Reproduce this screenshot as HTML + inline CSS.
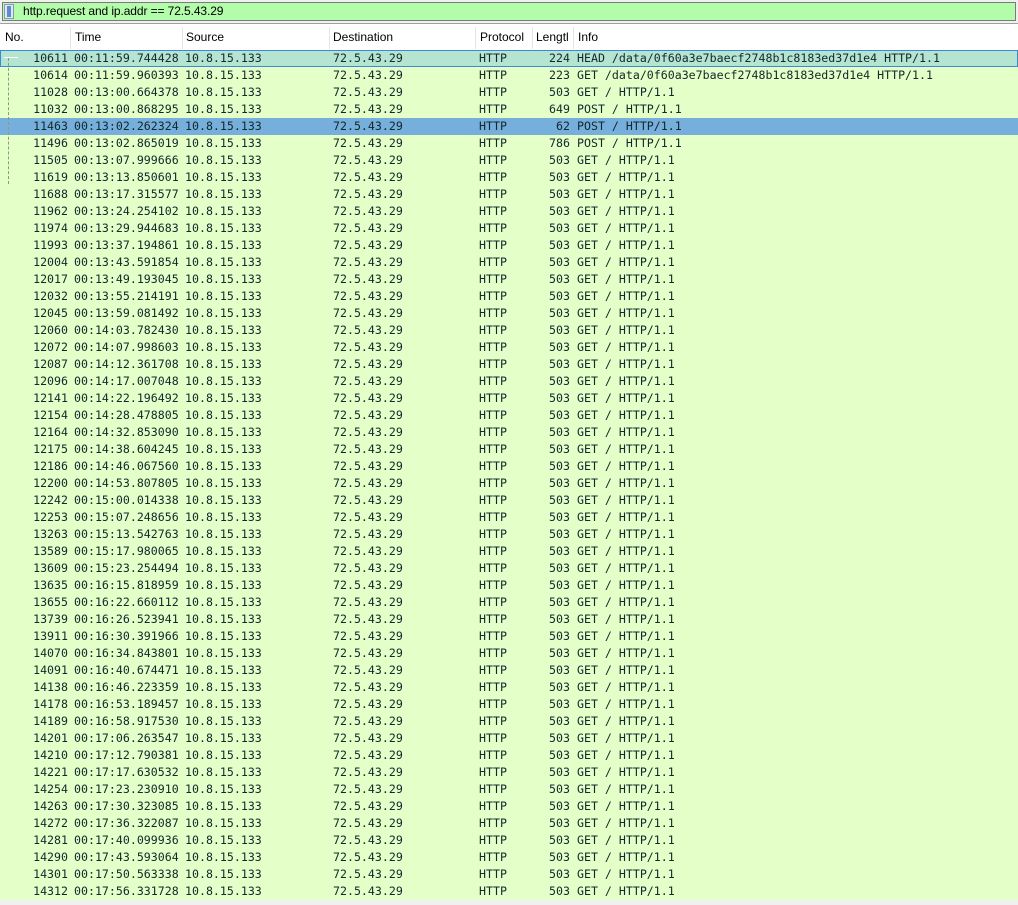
<!DOCTYPE html>
<html><head><style>
body{margin:0;width:1018px;height:905px;background:#f0f0f0;overflow:hidden;position:relative;font-family:"Liberation Sans",sans-serif}
#fb{position:absolute;left:0;top:0;width:1018px;height:23px;background:#f0f0f0}
#fin{position:absolute;left:2px;top:2px;width:1014px;height:19px;background:#b3fca9;border:1px solid #7a7a7a;box-sizing:border-box}
#bm{position:absolute;left:4px;top:4px;width:10px;height:15px;background:#dfe8f2;border:1px solid #8a9ab0;box-sizing:border-box}
#bm:after{content:"";position:absolute;left:2px;top:1px;width:4px;height:11px;background:#5b8ccf}
#ft{position:absolute;left:23px;top:4px;font-size:12px;color:#000;letter-spacing:-0.1px}
#hd{position:absolute;left:0;top:23px;width:1018px;height:27px;background:#fff;border-top:1px solid #a0a0a0;box-sizing:border-box}
.h{position:absolute;top:6px;font-size:12px;color:#000}
.sep{position:absolute;top:3px;width:1px;height:22px;background:#e5e5e5}
#rows{position:absolute;left:0;top:50px;width:1018px}
.r{height:17px;background:#e4ffc7;position:relative;font-family:"DejaVu Sans Mono","Liberation Mono",monospace;font-size:11.6px;line-height:17px;color:#12272e;white-space:pre}
.r span{position:absolute;top:0}
.n{right:950px}.t{left:74px}.s{left:185px}.d{left:333px}.p{left:479px}.l{right:448px}.i{left:577px}
.a{background:#b5e4d0;outline:1px solid #3b88d6;outline-offset:-1px}
.b{background:#76aedc}
</style></head><body>
<div id="fb"><div id="fin"></div><div id="bm"></div><div id="ft">http.request and ip.addr == 72.5.43.29</div></div>
<div id="hd">
<span class="h" style="left:5px">No.</span><div class="sep" style="left:70px"></div>
<span class="h" style="left:75px">Time</span><div class="sep" style="left:182px"></div>
<span class="h" style="left:186px">Source</span><div class="sep" style="left:329px"></div>
<span class="h" style="left:333px">Destination</span><div class="sep" style="left:475px"></div>
<span class="h" style="left:480px">Protocol</span><div class="sep" style="left:532px"></div>
<span class="h" style="left:536px">Lengtl</span><div class="sep" style="left:573px"></div>
<span class="h" style="left:578px">Info</span>
</div>
<div id="rows">
<div class="r a"><span class="n">10611</span><span class="t">00:11:59.744428</span><span class="s">10.8.15.133</span><span class="d">72.5.43.29</span><span class="p">HTTP</span><span class="l">224</span><span class="i">HEAD /data/0f60a3e7baecf2748b1c8183ed37d1e4 HTTP/1.1</span></div>
<div class="r"><span class="n">10614</span><span class="t">00:11:59.960393</span><span class="s">10.8.15.133</span><span class="d">72.5.43.29</span><span class="p">HTTP</span><span class="l">223</span><span class="i">GET /data/0f60a3e7baecf2748b1c8183ed37d1e4 HTTP/1.1</span></div>
<div class="r"><span class="n">11028</span><span class="t">00:13:00.664378</span><span class="s">10.8.15.133</span><span class="d">72.5.43.29</span><span class="p">HTTP</span><span class="l">503</span><span class="i">GET / HTTP/1.1</span></div>
<div class="r"><span class="n">11032</span><span class="t">00:13:00.868295</span><span class="s">10.8.15.133</span><span class="d">72.5.43.29</span><span class="p">HTTP</span><span class="l">649</span><span class="i">POST / HTTP/1.1</span></div>
<div class="r b"><span class="n">11463</span><span class="t">00:13:02.262324</span><span class="s">10.8.15.133</span><span class="d">72.5.43.29</span><span class="p">HTTP</span><span class="l">62</span><span class="i">POST / HTTP/1.1</span></div>
<div class="r"><span class="n">11496</span><span class="t">00:13:02.865019</span><span class="s">10.8.15.133</span><span class="d">72.5.43.29</span><span class="p">HTTP</span><span class="l">786</span><span class="i">POST / HTTP/1.1</span></div>
<div class="r"><span class="n">11505</span><span class="t">00:13:07.999666</span><span class="s">10.8.15.133</span><span class="d">72.5.43.29</span><span class="p">HTTP</span><span class="l">503</span><span class="i">GET / HTTP/1.1</span></div>
<div class="r"><span class="n">11619</span><span class="t">00:13:13.850601</span><span class="s">10.8.15.133</span><span class="d">72.5.43.29</span><span class="p">HTTP</span><span class="l">503</span><span class="i">GET / HTTP/1.1</span></div>
<div class="r"><span class="n">11688</span><span class="t">00:13:17.315577</span><span class="s">10.8.15.133</span><span class="d">72.5.43.29</span><span class="p">HTTP</span><span class="l">503</span><span class="i">GET / HTTP/1.1</span></div>
<div class="r"><span class="n">11962</span><span class="t">00:13:24.254102</span><span class="s">10.8.15.133</span><span class="d">72.5.43.29</span><span class="p">HTTP</span><span class="l">503</span><span class="i">GET / HTTP/1.1</span></div>
<div class="r"><span class="n">11974</span><span class="t">00:13:29.944683</span><span class="s">10.8.15.133</span><span class="d">72.5.43.29</span><span class="p">HTTP</span><span class="l">503</span><span class="i">GET / HTTP/1.1</span></div>
<div class="r"><span class="n">11993</span><span class="t">00:13:37.194861</span><span class="s">10.8.15.133</span><span class="d">72.5.43.29</span><span class="p">HTTP</span><span class="l">503</span><span class="i">GET / HTTP/1.1</span></div>
<div class="r"><span class="n">12004</span><span class="t">00:13:43.591854</span><span class="s">10.8.15.133</span><span class="d">72.5.43.29</span><span class="p">HTTP</span><span class="l">503</span><span class="i">GET / HTTP/1.1</span></div>
<div class="r"><span class="n">12017</span><span class="t">00:13:49.193045</span><span class="s">10.8.15.133</span><span class="d">72.5.43.29</span><span class="p">HTTP</span><span class="l">503</span><span class="i">GET / HTTP/1.1</span></div>
<div class="r"><span class="n">12032</span><span class="t">00:13:55.214191</span><span class="s">10.8.15.133</span><span class="d">72.5.43.29</span><span class="p">HTTP</span><span class="l">503</span><span class="i">GET / HTTP/1.1</span></div>
<div class="r"><span class="n">12045</span><span class="t">00:13:59.081492</span><span class="s">10.8.15.133</span><span class="d">72.5.43.29</span><span class="p">HTTP</span><span class="l">503</span><span class="i">GET / HTTP/1.1</span></div>
<div class="r"><span class="n">12060</span><span class="t">00:14:03.782430</span><span class="s">10.8.15.133</span><span class="d">72.5.43.29</span><span class="p">HTTP</span><span class="l">503</span><span class="i">GET / HTTP/1.1</span></div>
<div class="r"><span class="n">12072</span><span class="t">00:14:07.998603</span><span class="s">10.8.15.133</span><span class="d">72.5.43.29</span><span class="p">HTTP</span><span class="l">503</span><span class="i">GET / HTTP/1.1</span></div>
<div class="r"><span class="n">12087</span><span class="t">00:14:12.361708</span><span class="s">10.8.15.133</span><span class="d">72.5.43.29</span><span class="p">HTTP</span><span class="l">503</span><span class="i">GET / HTTP/1.1</span></div>
<div class="r"><span class="n">12096</span><span class="t">00:14:17.007048</span><span class="s">10.8.15.133</span><span class="d">72.5.43.29</span><span class="p">HTTP</span><span class="l">503</span><span class="i">GET / HTTP/1.1</span></div>
<div class="r"><span class="n">12141</span><span class="t">00:14:22.196492</span><span class="s">10.8.15.133</span><span class="d">72.5.43.29</span><span class="p">HTTP</span><span class="l">503</span><span class="i">GET / HTTP/1.1</span></div>
<div class="r"><span class="n">12154</span><span class="t">00:14:28.478805</span><span class="s">10.8.15.133</span><span class="d">72.5.43.29</span><span class="p">HTTP</span><span class="l">503</span><span class="i">GET / HTTP/1.1</span></div>
<div class="r"><span class="n">12164</span><span class="t">00:14:32.853090</span><span class="s">10.8.15.133</span><span class="d">72.5.43.29</span><span class="p">HTTP</span><span class="l">503</span><span class="i">GET / HTTP/1.1</span></div>
<div class="r"><span class="n">12175</span><span class="t">00:14:38.604245</span><span class="s">10.8.15.133</span><span class="d">72.5.43.29</span><span class="p">HTTP</span><span class="l">503</span><span class="i">GET / HTTP/1.1</span></div>
<div class="r"><span class="n">12186</span><span class="t">00:14:46.067560</span><span class="s">10.8.15.133</span><span class="d">72.5.43.29</span><span class="p">HTTP</span><span class="l">503</span><span class="i">GET / HTTP/1.1</span></div>
<div class="r"><span class="n">12200</span><span class="t">00:14:53.807805</span><span class="s">10.8.15.133</span><span class="d">72.5.43.29</span><span class="p">HTTP</span><span class="l">503</span><span class="i">GET / HTTP/1.1</span></div>
<div class="r"><span class="n">12242</span><span class="t">00:15:00.014338</span><span class="s">10.8.15.133</span><span class="d">72.5.43.29</span><span class="p">HTTP</span><span class="l">503</span><span class="i">GET / HTTP/1.1</span></div>
<div class="r"><span class="n">12253</span><span class="t">00:15:07.248656</span><span class="s">10.8.15.133</span><span class="d">72.5.43.29</span><span class="p">HTTP</span><span class="l">503</span><span class="i">GET / HTTP/1.1</span></div>
<div class="r"><span class="n">13263</span><span class="t">00:15:13.542763</span><span class="s">10.8.15.133</span><span class="d">72.5.43.29</span><span class="p">HTTP</span><span class="l">503</span><span class="i">GET / HTTP/1.1</span></div>
<div class="r"><span class="n">13589</span><span class="t">00:15:17.980065</span><span class="s">10.8.15.133</span><span class="d">72.5.43.29</span><span class="p">HTTP</span><span class="l">503</span><span class="i">GET / HTTP/1.1</span></div>
<div class="r"><span class="n">13609</span><span class="t">00:15:23.254494</span><span class="s">10.8.15.133</span><span class="d">72.5.43.29</span><span class="p">HTTP</span><span class="l">503</span><span class="i">GET / HTTP/1.1</span></div>
<div class="r"><span class="n">13635</span><span class="t">00:16:15.818959</span><span class="s">10.8.15.133</span><span class="d">72.5.43.29</span><span class="p">HTTP</span><span class="l">503</span><span class="i">GET / HTTP/1.1</span></div>
<div class="r"><span class="n">13655</span><span class="t">00:16:22.660112</span><span class="s">10.8.15.133</span><span class="d">72.5.43.29</span><span class="p">HTTP</span><span class="l">503</span><span class="i">GET / HTTP/1.1</span></div>
<div class="r"><span class="n">13739</span><span class="t">00:16:26.523941</span><span class="s">10.8.15.133</span><span class="d">72.5.43.29</span><span class="p">HTTP</span><span class="l">503</span><span class="i">GET / HTTP/1.1</span></div>
<div class="r"><span class="n">13911</span><span class="t">00:16:30.391966</span><span class="s">10.8.15.133</span><span class="d">72.5.43.29</span><span class="p">HTTP</span><span class="l">503</span><span class="i">GET / HTTP/1.1</span></div>
<div class="r"><span class="n">14070</span><span class="t">00:16:34.843801</span><span class="s">10.8.15.133</span><span class="d">72.5.43.29</span><span class="p">HTTP</span><span class="l">503</span><span class="i">GET / HTTP/1.1</span></div>
<div class="r"><span class="n">14091</span><span class="t">00:16:40.674471</span><span class="s">10.8.15.133</span><span class="d">72.5.43.29</span><span class="p">HTTP</span><span class="l">503</span><span class="i">GET / HTTP/1.1</span></div>
<div class="r"><span class="n">14138</span><span class="t">00:16:46.223359</span><span class="s">10.8.15.133</span><span class="d">72.5.43.29</span><span class="p">HTTP</span><span class="l">503</span><span class="i">GET / HTTP/1.1</span></div>
<div class="r"><span class="n">14178</span><span class="t">00:16:53.189457</span><span class="s">10.8.15.133</span><span class="d">72.5.43.29</span><span class="p">HTTP</span><span class="l">503</span><span class="i">GET / HTTP/1.1</span></div>
<div class="r"><span class="n">14189</span><span class="t">00:16:58.917530</span><span class="s">10.8.15.133</span><span class="d">72.5.43.29</span><span class="p">HTTP</span><span class="l">503</span><span class="i">GET / HTTP/1.1</span></div>
<div class="r"><span class="n">14201</span><span class="t">00:17:06.263547</span><span class="s">10.8.15.133</span><span class="d">72.5.43.29</span><span class="p">HTTP</span><span class="l">503</span><span class="i">GET / HTTP/1.1</span></div>
<div class="r"><span class="n">14210</span><span class="t">00:17:12.790381</span><span class="s">10.8.15.133</span><span class="d">72.5.43.29</span><span class="p">HTTP</span><span class="l">503</span><span class="i">GET / HTTP/1.1</span></div>
<div class="r"><span class="n">14221</span><span class="t">00:17:17.630532</span><span class="s">10.8.15.133</span><span class="d">72.5.43.29</span><span class="p">HTTP</span><span class="l">503</span><span class="i">GET / HTTP/1.1</span></div>
<div class="r"><span class="n">14254</span><span class="t">00:17:23.230910</span><span class="s">10.8.15.133</span><span class="d">72.5.43.29</span><span class="p">HTTP</span><span class="l">503</span><span class="i">GET / HTTP/1.1</span></div>
<div class="r"><span class="n">14263</span><span class="t">00:17:30.323085</span><span class="s">10.8.15.133</span><span class="d">72.5.43.29</span><span class="p">HTTP</span><span class="l">503</span><span class="i">GET / HTTP/1.1</span></div>
<div class="r"><span class="n">14272</span><span class="t">00:17:36.322087</span><span class="s">10.8.15.133</span><span class="d">72.5.43.29</span><span class="p">HTTP</span><span class="l">503</span><span class="i">GET / HTTP/1.1</span></div>
<div class="r"><span class="n">14281</span><span class="t">00:17:40.099936</span><span class="s">10.8.15.133</span><span class="d">72.5.43.29</span><span class="p">HTTP</span><span class="l">503</span><span class="i">GET / HTTP/1.1</span></div>
<div class="r"><span class="n">14290</span><span class="t">00:17:43.593064</span><span class="s">10.8.15.133</span><span class="d">72.5.43.29</span><span class="p">HTTP</span><span class="l">503</span><span class="i">GET / HTTP/1.1</span></div>
<div class="r"><span class="n">14301</span><span class="t">00:17:50.563338</span><span class="s">10.8.15.133</span><span class="d">72.5.43.29</span><span class="p">HTTP</span><span class="l">503</span><span class="i">GET / HTTP/1.1</span></div>
<div class="r"><span class="n">14312</span><span class="t">00:17:56.331728</span><span class="s">10.8.15.133</span><span class="d">72.5.43.29</span><span class="p">HTTP</span><span class="l">503</span><span class="i">GET / HTTP/1.1</span></div>
</div>
<div style="position:absolute;left:8px;top:58px;width:0;height:126px;border-left:1px dashed #8a9a80"></div>
<div style="position:absolute;left:4px;top:57px;width:14px;height:1px;background:#fff"></div>
</body></html>
